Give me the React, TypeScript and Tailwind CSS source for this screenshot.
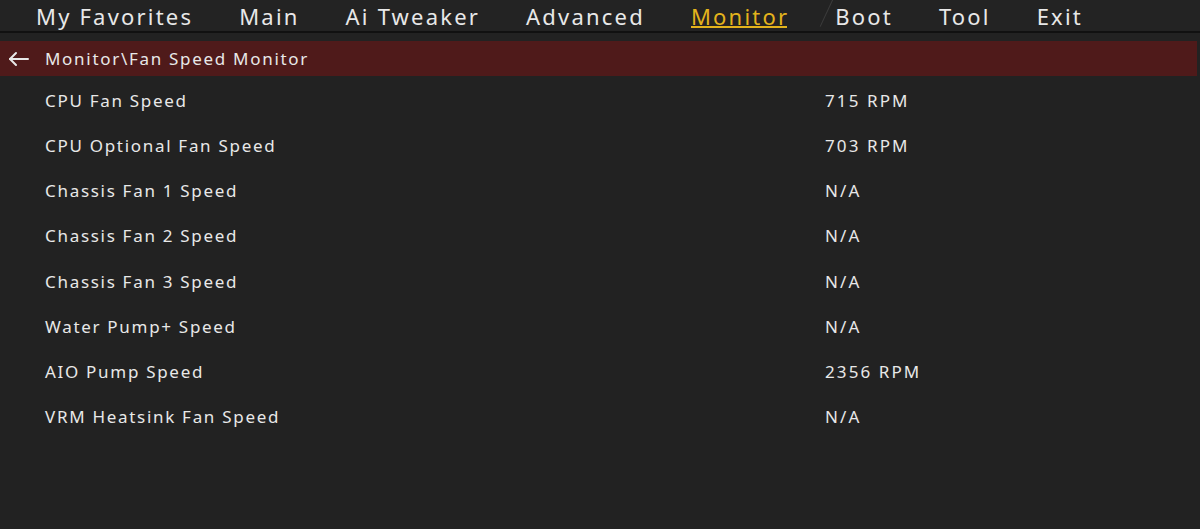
import React from "react";

const tabs = ["My Favorites", "Main", "Ai Tweaker", "Advanced", "Monitor", "Boot", "Tool", "Exit"];

const rows: [string, string][] = [
  ["CPU Fan Speed", "715 RPM"],
  ["CPU Optional Fan Speed", "703 RPM"],
  ["Chassis Fan 1 Speed", "N/A"],
  ["Chassis Fan 2 Speed", "N/A"],
  ["Chassis Fan 3 Speed", "N/A"],
  ["Water Pump+ Speed", "N/A"],
  ["AIO Pump Speed", "2356 RPM"],
  ["VRM Heatsink Fan Speed", "N/A"],
];

export default function App() {
  return (
    <div className="w-[1200px] h-[529px] overflow-hidden bg-[#222222] text-[#e8e8e8] font-['Noto_Sans',sans-serif]">
      {/* top tabs */}
      <div className="relative h-[33px] bg-[#232323] border-b-2 border-[#111111] flex items-start pl-[36px] gap-[46px] text-[22px] leading-[33px] tracking-[2.2px]">
        {tabs.map((t) =>
          t === "Monitor" ? (
            <div key={t} className="relative text-[#e3b31c]">
              {t}
              <div className="absolute left-0 right-[2px] top-[26px] h-[2px] bg-[#e3b31c]" />
            </div>
          ) : (
            <div key={t}>{t}</div>
          )
        )}
        <div className="absolute left-[826px] top-[-2px] w-px h-[30px] bg-[#3c3c3c] rotate-[25deg]" />
      </div>

      <div className="pt-[8px] pr-[3px]">
        <div className="h-[35px] bg-[#4f1a1a] flex items-center text-[17px] tracking-[1.7px]">
          <svg viewBox="0 0 24 24" className="w-[24px] h-[24px] ml-[7px] mr-[14px]" fill="none" stroke="#e8e8e8" strokeWidth="2" strokeLinecap="round" strokeLinejoin="round">
            <path d="M21 12H3" />
            <path d="M9 6l-6 6 6 6" />
          </svg>
          <span>Monitor\Fan Speed Monitor</span>
        </div>
      </div>

      <div className="pt-[2px] text-[17px] tracking-[1.7px]">
        {rows.map(([label, value]) => (
          <div key={label} className="h-[45.2px] flex items-center">
            <div className="w-[825px] pl-[45px]">{label}</div>
            <div className="tracking-[2.1px]">{value}</div>
          </div>
        ))}
      </div>
    </div>
  );
}
